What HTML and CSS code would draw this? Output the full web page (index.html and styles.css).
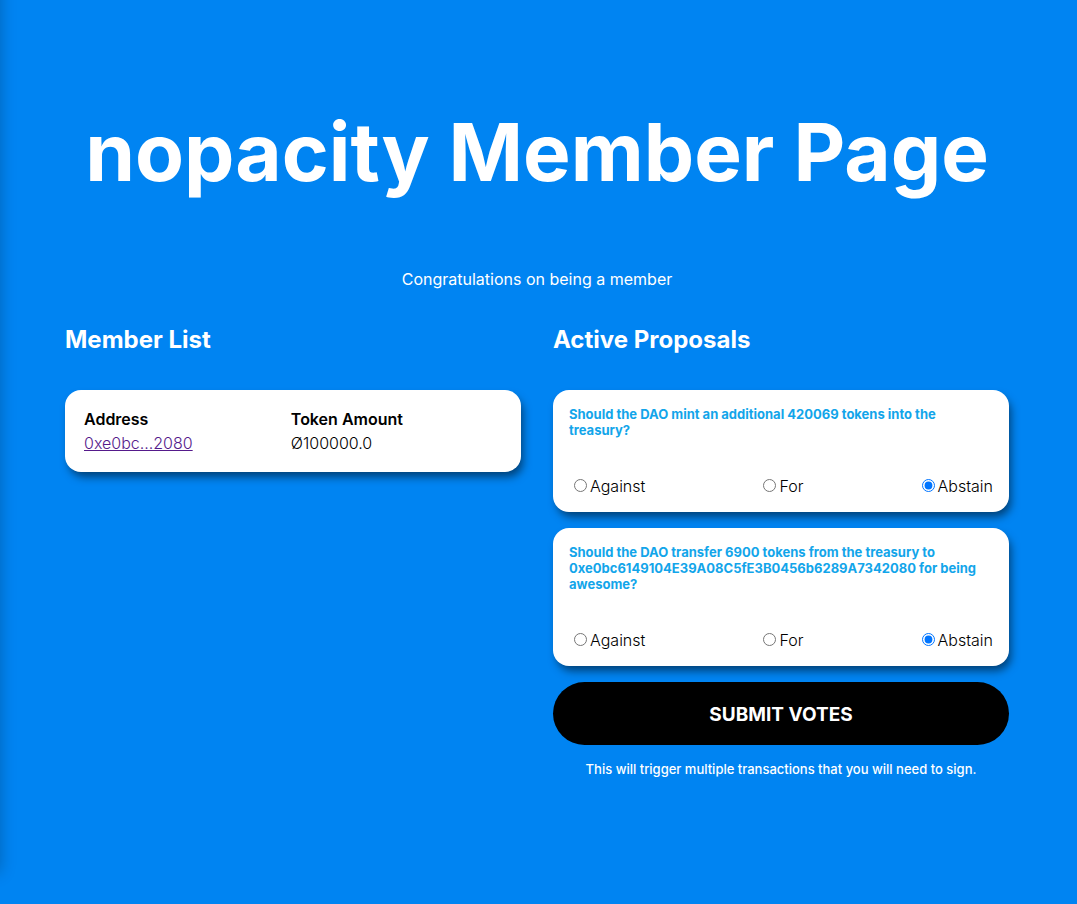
FILE: index.html
```html
<!DOCTYPE html>
<html lang="en">
<head>
<meta charset="utf-8">
<title>nopacity Member Page</title>
<link rel="stylesheet" href="styles.css">
</head>
<body>
<div class="edge-shadow"></div>
<main class="member-page">
  <h1>nopacity Member Page</h1>
  <p class="intro">Congratulations on being a member</p>
  <div class="columns">
    <section>
      <h2>Member List</h2>
      <div class="card members">
        <table>
          <thead><tr><th>Address</th><th>Token Amount</th></tr></thead>
          <tbody><tr><td><a href="#">0xe0bc...2080</a></td><td>Ø100000.0</td></tr></tbody>
        </table>
      </div>
    </section>
    <section>
      <h2>Active Proposals</h2>
      <form class="proposals">
        <div class="card">
          <h5>Should the DAO mint an additional 420069 tokens into the treasury?</h5>
          <div class="choices">
            <div><input type="radio" id="p1-against" name="p1"><label for="p1-against">Against</label></div>
            <div><input type="radio" id="p1-for" name="p1"><label for="p1-for">For</label></div>
            <div><input type="radio" id="p1-abstain" name="p1" checked><label for="p1-abstain">Abstain</label></div>
          </div>
        </div>
        <div class="card">
          <h5>Should the DAO transfer 6900 tokens from the treasury to 0xe0bc6149104E39A08C5fE3B0456b6289A7342080 for being awesome?</h5>
          <div class="choices">
            <div><input type="radio" id="p2-against" name="p2"><label for="p2-against">Against</label></div>
            <div><input type="radio" id="p2-for" name="p2"><label for="p2-for">For</label></div>
            <div><input type="radio" id="p2-abstain" name="p2" checked><label for="p2-abstain">Abstain</label></div>
          </div>
        </div>
        <button type="button">Submit Votes</button>
        <small>This will trigger multiple transactions that you will need to sign.</small>
      </form>
    </section>
  </div>
</main>
</body>
</html>
```
FILE: styles.css
```css
* { box-sizing: border-box; }
body {
  margin: 0;
  min-height: 100vh;
  background: #0084f2;
  color: #fff;
  font-family: Inter, sans-serif;
  font-size: 16px;
  line-height: 24px;
}
/* Shadow cast by the panel that sits off the left edge */
.edge-shadow {
  position: absolute;
  top: -32px;
  bottom: 32px;
  left: -32px;
  width: 32px;
  box-shadow: 0 0 16px rgba(0, 0, 0, 0.25);
}
.member-page {
  padding: 103px 68px 64px 65px;
  text-align: center;
}
h1 {
  margin: 0;
  font-size: 80px;
  line-height: 97px;
  font-weight: 700;
}
.intro { margin: 67px 0 32px; }
.columns {
  display: grid;
  grid-template-columns: 1fr 1fr;
  gap: 32px;
  text-align: left;
}
h2 {
  margin: 0 0 33px;
  font-size: 24px;
  line-height: 34px;
  font-weight: 700;
}
.card {
  padding: 16px;
  border-radius: 16px;
  background: #fff;
  color: #000;
  font-weight: 300;
  box-shadow: 3px 6px 8px -1px rgba(0, 0, 0, 0.5);
}
table {
  width: 100%;
  table-layout: fixed;
  border-spacing: 2px;
}
th, td { padding: 0 1px; text-align: left; line-height: 22px; }
th { font-weight: 600; }
th:first-child { width: 49%; }
a { color: #551a8b; }
.proposals {
  display: flex;
  flex-direction: column;
  gap: 16px;
}
h5 {
  margin: 0 0 38px;
  color: #12a5ea;
  font-size: 13px;
  line-height: 16px;
  font-weight: 700;
}
.choices {
  display: flex;
  justify-content: space-between;
  line-height: 20px;
}
input { margin: 3px 3px 0 5px; }
button {
  padding: 17px 16px 15px;
  border: 0;
  border-radius: 32px;
  background: #000;
  color: #fff;
  font: 700 19px/31px Inter, sans-serif;
  text-transform: uppercase;
}
small {
  font-size: 13px;
  line-height: 17px;
  font-weight: 500;
  text-align: center;
}
```
